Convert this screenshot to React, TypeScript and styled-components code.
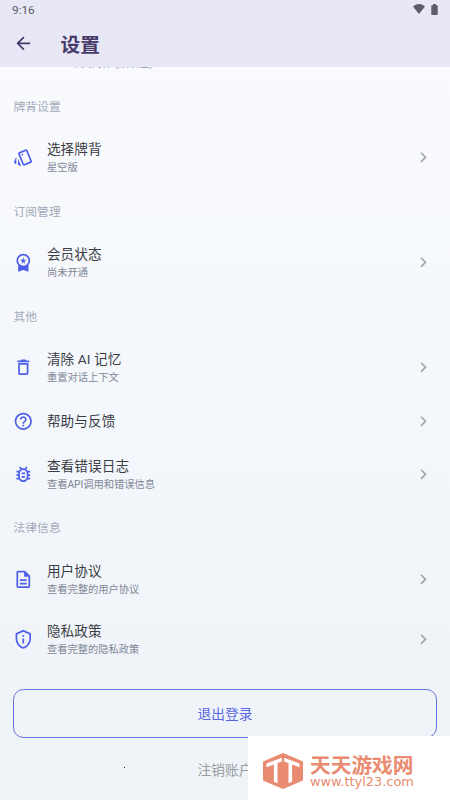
import React from 'react'
import { IconType } from 'react-icons'
import {
  MdArrowBack,
  MdChevronRight,
  MdDeleteOutline,
  MdHelpOutline,
  MdOutlineBugReport,
  MdOutlineDescription,
  MdOutlinePrivacyTip,
  MdOutlineStyle,
  MdWorkspacePremium,
} from 'react-icons/md'
import styled, { createGlobalStyle } from 'styled-components'

const GlobalStyle = createGlobalStyle`
  * {
    box-sizing: border-box;
  }

  body {
    margin: 0;
    font-family: Roboto, 'Noto Sans CJK SC', sans-serif;
  }
`

const Screen = styled.div`
  position: relative;
  display: flex;
  flex-direction: column;
  width: 450px;
  height: 800px;
  overflow: hidden;
  background: linear-gradient(#fafbfd, #f4f7fb 50%, #eef3f7);
`

const Header = styled.header`
  flex: none;
  height: 67px;
  background: #e7e7f5;
`

const StatusBar = styled.div`
  display: flex;
  justify-content: space-between;
  align-items: center;
  height: 20px;
  padding: 0 12px;
  color: #5d5c68;
  font-size: 11.8px;

  svg {
    display: block;
  }
`

const StatusIcons = styled.div`
  display: flex;
  align-items: center;
  gap: 6px;
  margin-top: -2px;
`

const TitleBar = styled.div`
  display: flex;
  align-items: center;
  height: 47px;
  padding-left: 13px;
  color: #473b6b;

  h1 {
    margin: 4px 0 0 27px;
    font-size: 19.7px;
    line-height: 28px;
    font-weight: 700;
  }
`

const Content = styled.main`
  flex: 1;
  display: flex;
  flex-direction: column;
  min-height: 0;
  overflow: hidden;
`

const ScrolledRow = styled.div`
  flex: none;
  display: flex;
  align-items: flex-end;
  height: 15.6px;

  span {
    margin-left: 71px;
    margin-bottom: 11px;
    color: #8b8f9d;
    font-size: 10.3px;
    line-height: 16px;
    white-space: nowrap;
  }
`

const SectionTitle = styled.h2`
  flex: none;
  height: 45px;
  margin: 0;
  padding: 2px 13.5px 0;
  color: #a3abba;
  font-size: 11.8px;
  font-weight: 400;
  line-height: 45px;
`

const Row = styled.div<{ $compact?: boolean }>`
  flex: none;
  display: flex;
  align-items: center;
  height: ${({ $compact }) => ($compact ? 46.5 : 60)}px;
  padding: 0 16px 0 13px;

  .icon {
    color: #4e5fe8;
  }

  .chevron {
    color: #a4a7ab;
  }
`

const RowText = styled.div`
  flex: 1;
  margin-left: 13.3px;
  padding-top: 2px;
`

const RowTitle = styled.div`
  color: #3b3e45;
  font-size: 13.6px;
  letter-spacing: 0.12px;
  line-height: 19px;
`

const RowSubtitle = styled.div`
  color: #7f8796;
  font-size: 10.25px;
  line-height: 18px;
`

const LogoutButton = styled.button`
  flex: none;
  height: 49px;
  margin: 19.9px 13px 0;
  border: 1px solid #6670e2;
  border-radius: 10.5px;
  background: transparent;
  color: #5865e5;
  font-family: inherit;
  font-size: 13.7px;
`

const DeleteAccount = styled.div`
  flex: none;
  margin-top: 22px;
  color: #999da1;
  font-size: 13.7px;
  line-height: 20px;
  text-align: center;
`

const Speck = styled.i`
  position: absolute;
  left: 124px;
  top: 767px;
  width: 1px;
  height: 1px;
  background: #222;
`

const Watermark = styled.div`
  position: absolute;
  right: 0;
  bottom: 0;
  display: flex;
  align-items: center;
  width: 202px;
  height: 64px;
  padding: 6px 0 0 15px;
  background: #fff;
  color: #e98b70;

  svg {
    flex: none;
  }
`

const Brand = styled.div`
  margin-left: 7px;
  padding-top: 2px;

  strong {
    display: block;
    font-size: 20.7px;
    font-weight: 700;
    line-height: 20px;
    white-space: nowrap;
  }

  span {
    display: block;
    width: 89px;
    font-family: 'DejaVu Sans', sans-serif;
    font-size: 11.5px;
    line-height: 13px;
    white-space: nowrap;
    transform: scaleX(1.12);
    transform-origin: left;
  }
`

interface SettingsItem {
  icon: IconType
  title: string
  subtitle?: string
}

interface SettingsSection {
  title: string
  items: SettingsItem[]
}

const sections: SettingsSection[] = [
  {
    title: '牌背设置',
    items: [{ icon: MdOutlineStyle, title: '选择牌背', subtitle: '星空版' }],
  },
  {
    title: '订阅管理',
    items: [
      { icon: MdWorkspacePremium, title: '会员状态', subtitle: '尚未开通' },
    ],
  },
  {
    title: '其他',
    items: [
      {
        icon: MdDeleteOutline,
        title: '清除 AI 记忆',
        subtitle: '重置对话上下文',
      },
      { icon: MdHelpOutline, title: '帮助与反馈' },
      {
        icon: MdOutlineBugReport,
        title: '查看错误日志',
        subtitle: '查看API调用和错误信息',
      },
    ],
  },
  {
    title: '法律信息',
    items: [
      {
        icon: MdOutlineDescription,
        title: '用户协议',
        subtitle: '查看完整的用户协议',
      },
      {
        icon: MdOutlinePrivacyTip,
        title: '隐私政策',
        subtitle: '查看完整的隐私政策',
      },
    ],
  },
]

const SettingsRow: React.FC<SettingsItem> = ({
  icon: Icon,
  title,
  subtitle,
}) => (
  <Row $compact={!subtitle}>
    <Icon className="icon" size={20.6} />
    <RowText>
      <RowTitle>{title}</RowTitle>
      {subtitle && <RowSubtitle>{subtitle}</RowSubtitle>}
    </RowText>
    <MdChevronRight className="chevron" size={20.6} />
  </Row>
)

const BrandLogo: React.FC = () => (
  <svg width="40" height="36" viewBox="0 0 40 36">
    <path d="M20 0 40 8.500v19L20 36 0 27.500v-19z" fill="#e98b70" />
    <path
      d="M3.500 10.500 18.800 4.800v3.700l-4.300 1.600v20.200l-3.600-1.500V11.500l-7.400 2.700z"
      fill="#fff"
    />
    <path
      d="M36.500 10.500 21.200 4.800v3.700l4.300 1.600v20.200l3.600-1.500V11.500l7.400 2.700z"
      fill="#fff"
    />
  </svg>
)

export default function App() {
  return (
    <Screen>
      <GlobalStyle />
      <Header>
        <StatusBar>
          <span>9:16</span>
          <StatusIcons>
            <svg width="12" height="10" viewBox="0 0 12 10">
              <path d="M0 2.500Q6-2.300 12 2.500L6 10z" fill="currentColor" />
            </svg>
            <svg width="7" height="11" viewBox="0 0 7 11">
              <path
                d="M2 0h3v1.200h1q.7 0 .7.700v8.400q0 .7-.7.700H1q-.7 0-.7-.7V1.900q0-.7.700-.7h1z"
                fill="currentColor"
              />
            </svg>
          </StatusIcons>
        </StatusBar>
        <TitleBar>
          <MdArrowBack size={20.6} />
          <h1>设置</h1>
        </TitleBar>
      </Header>
      <Content>
        <ScrolledRow>
          <span>中文简体 (默认值)</span>
        </ScrolledRow>
        {sections.map((section) => (
          <React.Fragment key={section.title}>
            <SectionTitle>{section.title}</SectionTitle>
            {section.items.map((item) => (
              <SettingsRow key={item.title} {...item} />
            ))}
          </React.Fragment>
        ))}
        <LogoutButton>退出登录</LogoutButton>
        <DeleteAccount>注销账户</DeleteAccount>
      </Content>
      <Speck />
      <Watermark>
        <BrandLogo />
        <Brand>
          <strong>天天游戏网</strong>
          <span>www.ttyl23.com</span>
        </Brand>
      </Watermark>
    </Screen>
  )
}
